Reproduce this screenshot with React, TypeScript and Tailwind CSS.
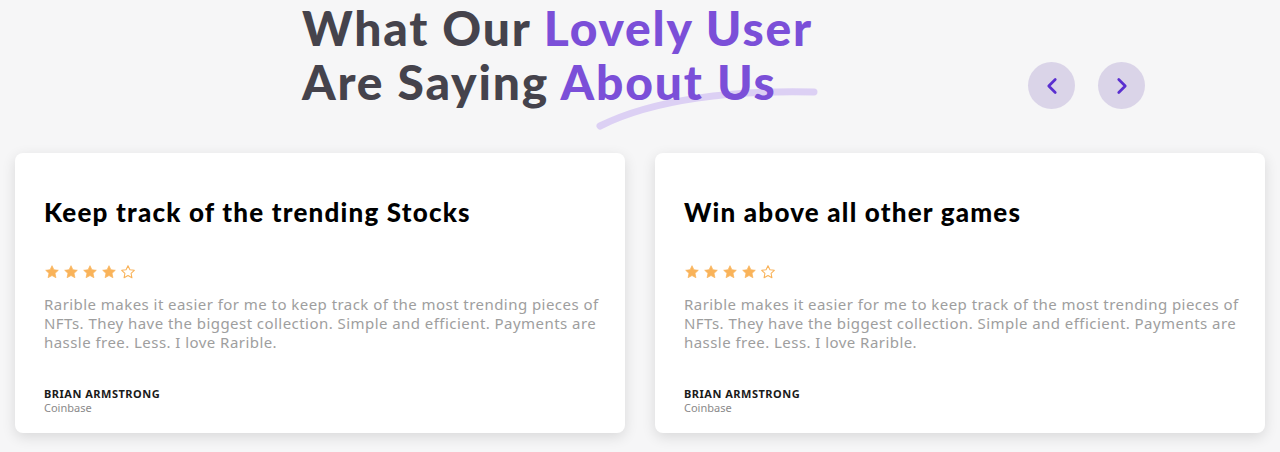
import { ChevronLeft, ChevronRight } from "lucide-react";

const reviews = [
  { title: "Keep track of the trending Stocks" },
  { title: "Win above all other games" },
];

const body =
  "Rarible makes it easier for me to keep track of the most trending pieces of NFTs. They have the biggest collection. Simple and efficient. Payments are hassle free. Less. I love Rarible.";

const Star = ({ filled }: { filled: boolean }) => (
  <svg width="16" height="16" viewBox="0 0 24 24">
    <path
      d="M12 2.5l2.9 6.1 6.6.8-4.9 4.6 1.3 6.6L12 17.3l-5.9 3.3 1.3-6.6-4.9-4.6 6.6-.8z"
      fill={filled ? "#f9b35a" : "none"}
      stroke="#f9b35a"
      strokeWidth={filled ? 1 : 1.6}
      strokeLinejoin="round"
    />
  </svg>
);

const ReviewCard = ({ title }: { title: string }) => (
  <div className="flex h-[280px] flex-col rounded-lg bg-white pt-[43px] pr-[20px] pb-[18px] pl-[29px] shadow-[0_4px_14px_rgba(0,0,0,0.12)]">
    <h3 className="font-['Lato'] text-[26px] leading-[32px] font-black tracking-[1.2px] text-black">{title}</h3>
    <div className="mt-[36px] flex gap-[3px]">
      {[0, 1, 2, 3, 4].map((i) => (
        <Star key={i} filled={i < 4} />
      ))}
    </div>
    <p className="mt-[15px] font-['Noto_Sans'] text-[15px] leading-[19px] tracking-[0.45px] text-[#9e9e9e]">{body}</p>
    <div className="mt-auto font-['Noto_Sans']">
      <div className="text-[11px] leading-[14px] font-bold tracking-[0.5px] text-[#1a1a1a]">BRIAN ARMSTRONG</div>
      <div className="text-[11px] leading-[14px] text-[#8a8a8a]">Coinbase</div>
    </div>
  </div>
);

export default function App() {
  return (
    <div className="min-h-[452px] w-full bg-[#f6f6f7] font-['Lato']">
      <div className="flex items-start justify-between pr-[135px] pl-[302px]">
        <div className="relative pt-[1px]">
          <h2 className="relative z-10 text-[48px] leading-[54px] font-black tracking-[1.8px] text-[#45434c]">
            What Our <span className="text-[#7b4fd8]">Lovely User</span>
            <br />
            Are Saying <span className="text-[#7b4fd8]">About Us</span>
          </h2>
          <svg className="absolute top-[84px] left-[292px]" width="226" height="50" viewBox="0 0 226 50">
            <path d="M6 42 C 60 15, 140 6, 220 8" fill="none" stroke="#dcd0f4" strokeWidth="7" strokeLinecap="round" />
          </svg>
        </div>
        <div className="mt-[62px] flex gap-[23px]">
          <button className="flex h-[47px] w-[47px] items-center justify-center rounded-full bg-[#dad4e8] text-[#5a2fd0]">
            <ChevronLeft size={26} strokeWidth={2.5} />
          </button>
          <button className="flex h-[47px] w-[47px] items-center justify-center rounded-full bg-[#dad4e8] text-[#5a2fd0]">
            <ChevronRight size={26} strokeWidth={2.5} />
          </button>
        </div>
      </div>
      <div className="mt-[44px] grid grid-cols-2 gap-[30px] px-[15px]">
        {reviews.map((r) => (
          <ReviewCard key={r.title} title={r.title} />
        ))}
      </div>
    </div>
  );
}
